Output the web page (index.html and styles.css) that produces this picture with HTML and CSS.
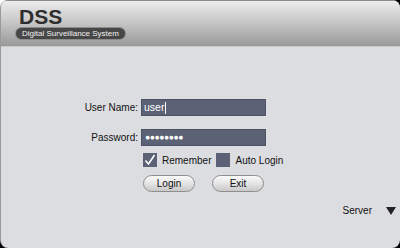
FILE: index.html
```html
<!DOCTYPE html>
<html lang="en">
<head>
    <meta charset="UTF-8">
    <title>DSS Login</title>
    <link rel="stylesheet" href="styles.css">
</head>
<body>
    <div class="window">
        <!-- header -->
        <div class="header">
            <div class="logo">DSS</div>
            <div class="tagline">Digital Surveillance System</div>
        </div>

        <!-- login form -->
        <div class="content">
            <form class="login-form">
                <div class="row">
                    <label for="userName">User Name:</label>
                    <div class="field">user<span class="caret"></span></div>
                </div>
                <div class="row">
                    <label for="password">Password:</label>
                    <div class="field dots">&#9679;&#9679;&#9679;&#9679;&#9679;&#9679;&#9679;&#9679;</div>
                </div>
                <div class="checks">
                    <span class="check checked">
                        <svg width="14" height="14" viewBox="0 0 14 14"><path d="M2.5 7.5 L5.5 11 L11.5 2" fill="none" stroke="#fff" stroke-width="1.6"/></svg>
                    </span>
                    <span class="check-label">Remember</span>
                    <span class="check"></span>
                    <span class="check-label">Auto Login</span>
                </div>
                <div class="buttons">
                    <button type="button" class="btn">Login</button>
                    <button type="button" class="btn">Exit</button>
                </div>
            </form>
            <div class="server">
                <span>Server</span>
                <span class="arrow"></span>
            </div>
        </div>
    </div>
</body>
</html>
```

FILE: styles.css
```css
html, body {
    margin: 0;
    padding: 0;
    width: 400px;
    height: 248px;
    background-color: #000;
    overflow: hidden;
}
body {
    font-family: "Liberation Sans", Arial, sans-serif;
    font-size: 10px;
    color: #111;
    position: relative;
}
body::before {
    content: "";
    position: absolute;
    left: 0;
    top: 0;
    width: 10px;
    height: 10px;
    background-color: #fff;
}
.window {
    position: relative;
    width: 400px;
    height: 248px;
    border-radius: 8px;
    overflow: hidden;
    background-color: #dcdde1;
    display: flex;
    flex-direction: column;
    box-sizing: border-box;
    border-left: 1px solid #9a9a9a;
}
.header {
    height: 47px;
    background: linear-gradient(#ececec, #c4c4c4 50%, #999);
    border-top: 1px solid #8a8a8a;
    border-bottom: 1px solid #c9c9cb;
    box-sizing: border-box;
    padding: 5px 0 0 15px;
}
.logo {
    font-weight: bold;
    font-size: 21px;
    line-height: 21px;
    color: #2e2e2e;
    padding-left: 3px;
}
.tagline {
    display: inline-block;
    margin-top: 1px;
    background-color: #474747;
    color: #f2f2f2;
    font-size: 8px;
    line-height: 11px;
    padding: 0 6px;
    border-radius: 6px;
    box-shadow: 0 0 0 1px #8c8c8c;
}
.content {
    flex: 1;
    display: flex;
    flex-direction: column;
}
.login-form {
    padding: 52px 0 0 0;
    display: flex;
    flex-direction: column;
}
.row {
    display: flex;
    align-items: center;
    margin-bottom: 13px;
}
.row label {
    width: 137px;
    text-align: right;
    padding-right: 3px;
}
.field {
    width: 125px;
    height: 17px;
    box-sizing: border-box;
    border: 1px solid #4c5262;
    background-color: #5b6275;
    color: #fff;
    font-size: 10.5px;
    line-height: 15px;
    padding: 0 2px;
    display: flex;
    align-items: center;
}
.caret {
    width: 1px;
    height: 12px;
    background-color: #fff;
    margin-left: 1px;
}
.dots {
    font-size: 8.5px;
    letter-spacing: -0.4px;
    padding-left: 3px;
}
.checks {
    display: flex;
    align-items: center;
    margin: -6px 0 0 142px;
}
.check {
    width: 14px;
    height: 14px;
    box-sizing: border-box;
    background-color: #5b6275;
    display: inline-flex;
    align-items: center;
    justify-content: center;
}
.check-label {
    margin: 0 5px 0 5px;
}
.buttons {
    display: flex;
    gap: 17px;
    margin: 8px 0 0 142px;
}
.btn {
    width: 52px;
    height: 17px;
    border-radius: 9px;
    border: 1px solid #8e8e8e;
    background: linear-gradient(#fbfbfb, #e4e4e4 50%, #c8c8c8);
    font-family: "Liberation Sans", Arial, sans-serif;
    font-size: 10px;
    color: #111;
    padding: 0;
}
.server {
    display: flex;
    align-items: center;
    justify-content: flex-end;
    margin: 13px 4px 0 0;
}
.arrow {
    width: 0;
    height: 0;
    border-left: 5px solid transparent;
    border-right: 5px solid transparent;
    border-top: 8px solid #222;
    margin-left: 14px;
}
```
